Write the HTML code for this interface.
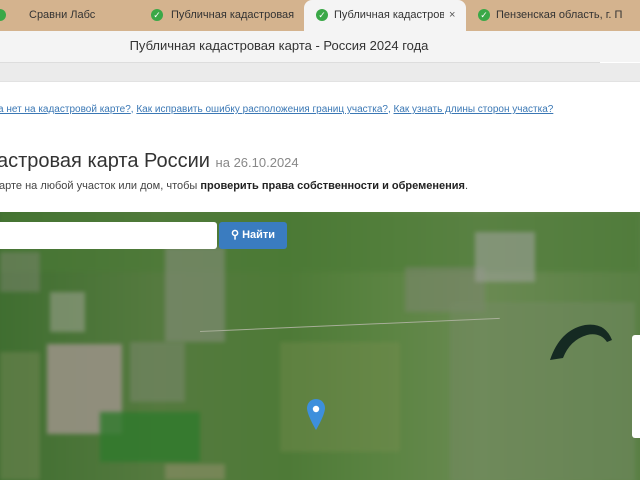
<!DOCTYPE html>
<html><head><meta charset="utf-8"><style>
*{margin:0;padding:0;box-sizing:border-box}
html,body{width:640px;height:480px;overflow:hidden}
body{background:#fff;font-family:"Liberation Sans",sans-serif;position:relative}
.a{position:absolute}
.tab{position:absolute;top:0;height:31px;font-size:11px;color:#333;line-height:31px;white-space:nowrap;overflow:hidden}
.ck{position:absolute;top:9px;width:12px;height:12px;border-radius:50%;background:#3aa847;color:#fff;font-size:9px;line-height:12px;text-align:center}
.m{position:absolute;filter:blur(2px)}
</style></head><body>
<div class="a" style="left:0;top:0;width:640px;height:31px;background:#d4b38e"></div>
<div class="ck" style="left:-6px"></div>
<div class="tab" style="left:29px">Сравни Лабс</div>
<div class="ck" style="left:151px">✓</div>
<div class="tab" style="left:171px;width:124px">Публичная кадастровая</div>
<div class="a" style="left:304px;top:0;width:162px;height:32px;background:#f4f4f4;border-radius:8px 8px 0 0"></div>
<div class="ck" style="left:316px">✓</div>
<div class="tab" style="left:334px;width:110px">Публичная кадастров</div>
<div class="tab" style="left:449px;color:#555">×</div>
<div class="ck" style="left:478px">✓</div>
<div class="tab" style="left:496px;width:144px">Пензенская область, г. П</div>
<div class="a" style="left:0;top:31px;width:640px;height:31px;background:#f4f4f4"></div>
<div class="a" style="left:0;top:36px;width:640px;text-align:center;font-size:13px;color:#333;line-height:20px;padding-right:82px">Публичная кадастровая карта - Россия 2024 года</div>
<div class="a" style="left:0;top:62px;width:600px;height:1px;background:#ddd"></div>
<div class="a" style="left:0;top:63px;width:640px;height:18px;background:#ebebeb"></div>
<div class="a" style="left:0;top:81px;width:640px;height:1px;background:#e2e2e2"></div>
<div class="a" style="left:-2px;top:104px;font-size:10px;color:#3b78b5;white-space:nowrap"><u>а нет на кадастровой карте?</u>, <u>Как исправить ошибку расположения границ участка?</u>, <u>Как узнать длины сторон участка?</u></div>
<div class="a" style="left:-3px;top:150px;font-size:20px;color:#333;white-space:nowrap">астровая карта России <span style="font-size:13px;color:#888">на 26.10.2024</span></div>
<div class="a" style="left:-1px;top:180px;font-size:11px;color:#444;white-space:nowrap">арте на любой участок или дом, чтобы <b style="color:#222">проверить права собственности и обременения</b>.</div>
<div class="a" style="left:0;top:212px;width:640px;height:268px;background:#4f7a3c;overflow:hidden">
<div class="m" style="left:-5px;top:-5px;width:650px;height:280px;background:linear-gradient(90deg,#3f6e30 0,#557a3f 25%,#4e7a37 45%,#5b8442 60%,#6a8a52 75%,#597f44 100%)"></div>
<div class="m" style="left:0;top:0;width:640px;height:60px;background:#4a7a35;opacity:.5"></div>
<div class="m" style="left:165px;top:35px;width:60px;height:95px;background:#8a8f80;opacity:.55"></div>
<div class="m" style="left:0;top:40px;width:40px;height:40px;background:#7d8570;opacity:.5"></div>
<div class="m" style="left:50px;top:80px;width:35px;height:40px;background:#a8a89c;opacity:.5"></div>
<div class="m" style="left:47px;top:132px;width:75px;height:90px;background:#9c9388;opacity:.85"></div>
<div class="m" style="left:130px;top:130px;width:55px;height:60px;background:#7f8972;opacity:.5"></div>
<div class="m" style="left:405px;top:55px;width:80px;height:45px;background:#7f8672;opacity:.5"></div>
<div class="m" style="left:475px;top:20px;width:60px;height:50px;background:#9ea19a;opacity:.6"></div>
<div class="m" style="left:450px;top:90px;width:185px;height:180px;background:#768a66;opacity:.45"></div>
<div class="m" style="left:100px;top:200px;width:100px;height:50px;background:#2f7a2c;opacity:.8"></div>
<div class="m" style="left:0;top:140px;width:40px;height:128px;background:#7a8a5a;opacity:.45"></div>
<div class="m" style="left:280px;top:130px;width:120px;height:110px;background:#7d8f52;opacity:.35"></div>
<div class="m" style="left:165px;top:252px;width:60px;height:16px;background:#9a9272;opacity:.5"></div>
<div class="a" style="left:200px;top:119px;width:300px;height:1px;background:#a7ae98;transform:rotate(-2.5deg);transform-origin:0 0"></div>
</div>
<svg class="a" style="left:545px;top:320px" width="70" height="40" viewBox="0 0 70 40"><path d="M5 40 Q15 10 40 5 Q60 2 67 20 L62 22 Q55 12 42 15 Q25 20 18 38 Z" fill="#152a22"/></svg>
<div class="a" style="left:0;top:222px;width:217px;height:27px;background:#fff;border-radius:0 3px 3px 0"></div>
<div class="a" style="left:219px;top:222px;width:68px;height:27px;background:#3a7cc0;border-radius:3px;color:#fff;font-size:11px;font-weight:bold;line-height:27px;text-align:center">&#9906; Найти</div>
<div class="a" style="left:632px;top:335px;width:8px;height:103px;background:#fff;border-radius:3px 0 0 3px"></div>
<svg class="a" style="left:305px;top:398px" width="22" height="34" viewBox="0 0 22 34"><path d="M11 1C5 1 2 6 2 10c0 7 9 22 9 22s9-15 9-22c0-4-3-9-9-9z" fill="#3d8fdc"/><circle cx="11" cy="11" r="3.2" fill="#fff"/></svg>
</body></html>
